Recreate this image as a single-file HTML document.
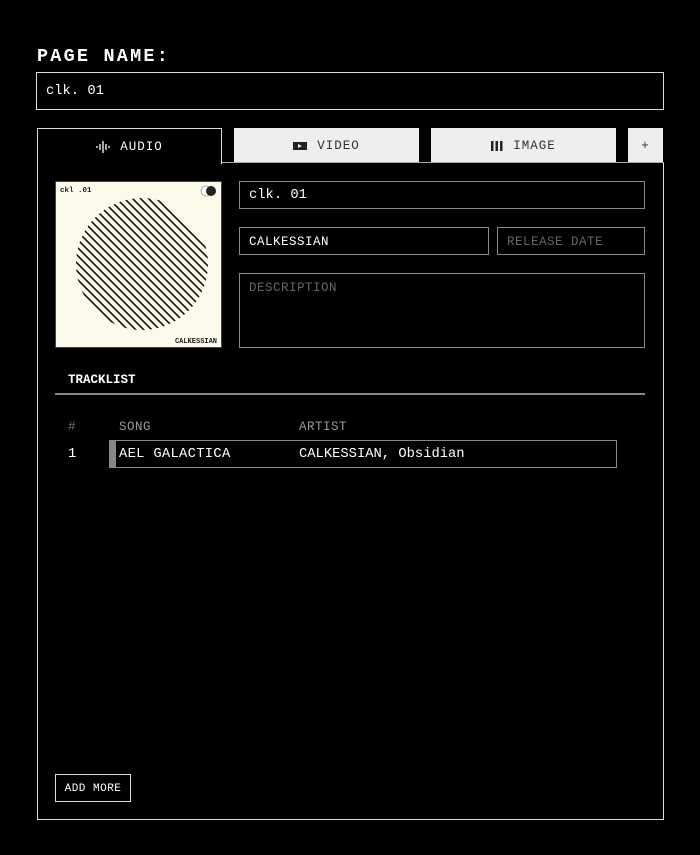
<!DOCTYPE html>
<html><head><style>
*{box-sizing:border-box;margin:0;padding:0}
body{width:700px;height:855px;background:#000;color:#fff;font-family:"Liberation Mono",monospace;font-size:13.8px;position:relative;overflow:hidden}
.a{position:absolute}
.box{position:absolute;border:1px solid #888}
.t{position:absolute;white-space:nowrap}
.tab{position:absolute;top:128px;height:34px;background:#eee;color:#333;display:flex;align-items:center;justify-content:center;gap:10px;letter-spacing:1px;font-size:12.5px;padding-top:2px}
</style></head><body>
<div class="t" style="left:37px;top:46px;font-weight:bold;font-size:18.5px;letter-spacing:2.2px">PAGE NAME:</div>
<div class="a" style="left:36px;top:72px;width:628px;height:38px;border:1px solid #ddd"></div>
<div class="t" style="left:46px;top:84px">clk. 01</div>

<div class="a" style="left:37px;top:162px;width:627px;height:658px;border:1px solid #ddd;border-top:1px solid #aaa"></div>
<div class="a" style="left:37px;top:128px;width:185px;height:36px;border:1px solid #ddd;border-bottom:none;background:#000;display:flex;align-items:center;justify-content:center;gap:10px;font-size:12.5px;letter-spacing:1px;padding-top:1px">
<svg width="14" height="14" viewBox="0 0 14 14"><g stroke="#fff" stroke-width="1.3"><line x1="1" y1="6" x2="1" y2="8"/><line x1="4" y1="4" x2="4" y2="10"/><line x1="7" y1="1" x2="7" y2="13"/><line x1="10" y1="4" x2="10" y2="10"/><line x1="13" y1="6" x2="13" y2="8"/></g></svg>AUDIO</div>
<div class="tab" style="left:234px;width:185px"><svg width="14" height="10"><rect x="0" y="1" width="14" height="8" fill="#222"/><path d="M5 3 L9 5 L5 7Z" fill="#eee"/></svg>VIDEO</div>
<div class="tab" style="left:431px;width:185px"><svg width="12" height="10"><rect x="0" y="0" width="2.5" height="10" fill="#222"/><rect x="4.5" y="0" width="2.5" height="10" fill="#222"/><rect x="9" y="0" width="2.5" height="10" fill="#222"/></svg>IMAGE</div>
<div class="tab" style="left:628px;width:35px">+</div>

<div class="a" style="left:55px;top:181px;width:167px;height:167px;background:#fcfbe9;border:1px solid #444">
<svg width="165" height="165" viewBox="0 0 165 165" style="position:absolute;left:0;top:0">
<defs><clipPath id="c"><circle cx="86" cy="82" r="66"/></clipPath></defs>
<g clip-path="url(#c)" stroke="#111" stroke-width="1.6" fill="none">
<path d="M-160 -20 L40 180 M-152 -20 L48 180 M-144 -20 L56 180 M-136 -20 L64 180 M-128 -20 L72 180 M-120 -20 L80 180 M-112 -20 L88 180 M-104 -20 L96 180 M-96 -20 L104 180 M-88 -20 L112 180 M-80 -20 L120 180 M-72 -20 L128 180 M-64 -20 L136 180 M-56 -20 L144 180 M-48 -20 L152 180 M-40 -20 L160 180 M-32 -20 L168 180 M-24 -20 L176 180 M-16 -20 L184 180 M-8 -20 L192 180 M0 -20 L200 180 M8 -20 L208 180 M16 -20 L216 180 M24 -20 L224 180 M32 -20 L232 180 M40 -20 L240 180 M48 -20 L248 180 M56 -20 L256 180 M64 -20 L264 180"/>
</g>
<circle cx="150" cy="9" r="5" fill="#fff" stroke="#999" stroke-width="0.8"/>
<circle cx="155" cy="9" r="5" fill="#222"/>
<text x="4" y="10" font-family="Liberation Mono" font-size="7.5" font-weight="bold" fill="#222">ckl .01</text>
<text x="161" y="161" text-anchor="end" font-family="Liberation Mono" font-size="7" font-weight="bold" fill="#222">CALKESSIAN</text>
</svg></div>

<div class="box" style="left:239px;top:181px;width:406px;height:28px"></div>
<div class="t" style="left:249px;top:188px">clk. 01</div>
<div class="box" style="left:239px;top:227px;width:250px;height:28px"></div>
<div class="t" style="left:249px;top:235px;font-size:12.5px;letter-spacing:.5px">CALKESSIAN</div>
<div class="box" style="left:497px;top:227px;width:148px;height:28px"></div>
<div class="t" style="left:507px;top:235px;font-size:12.5px;color:#666;letter-spacing:.5px">RELEASE DATE</div>
<div class="box" style="left:239px;top:273px;width:406px;height:75px"></div>
<div class="t" style="left:249px;top:281px;font-size:12.5px;color:#666;letter-spacing:.5px">DESCRIPTION</div>

<div class="t" style="left:68px;top:373px;font-weight:bold;font-size:12.5px">TRACKLIST</div>
<div class="a" style="left:55px;top:393px;width:590px;height:2px;background:#888"></div>
<div class="t" style="left:68px;top:420px;color:#777;font-size:12.5px">#</div>
<div class="t" style="left:119px;top:420px;color:#999;font-size:12.5px;letter-spacing:.5px">SONG</div>
<div class="t" style="left:299px;top:420px;color:#999;font-size:12.5px;letter-spacing:.5px">ARTIST</div>
<div class="t" style="left:68px;top:447px">1</div>
<div class="box" style="left:109px;top:440px;width:508px;height:28px;border-left:7px solid #888"></div>
<div class="t" style="left:119px;top:447px;letter-spacing:.3px">AEL GALACTICA</div>
<div class="t" style="left:299px;top:447px">CALKESSIAN, Obsidian</div>

<div class="a" style="left:55px;top:774px;width:76px;height:28px;border:1px solid #ddd;font-size:11px;display:flex;align-items:center;justify-content:center;letter-spacing:.5px;padding-top:2px">ADD MORE</div>
</body></html>
